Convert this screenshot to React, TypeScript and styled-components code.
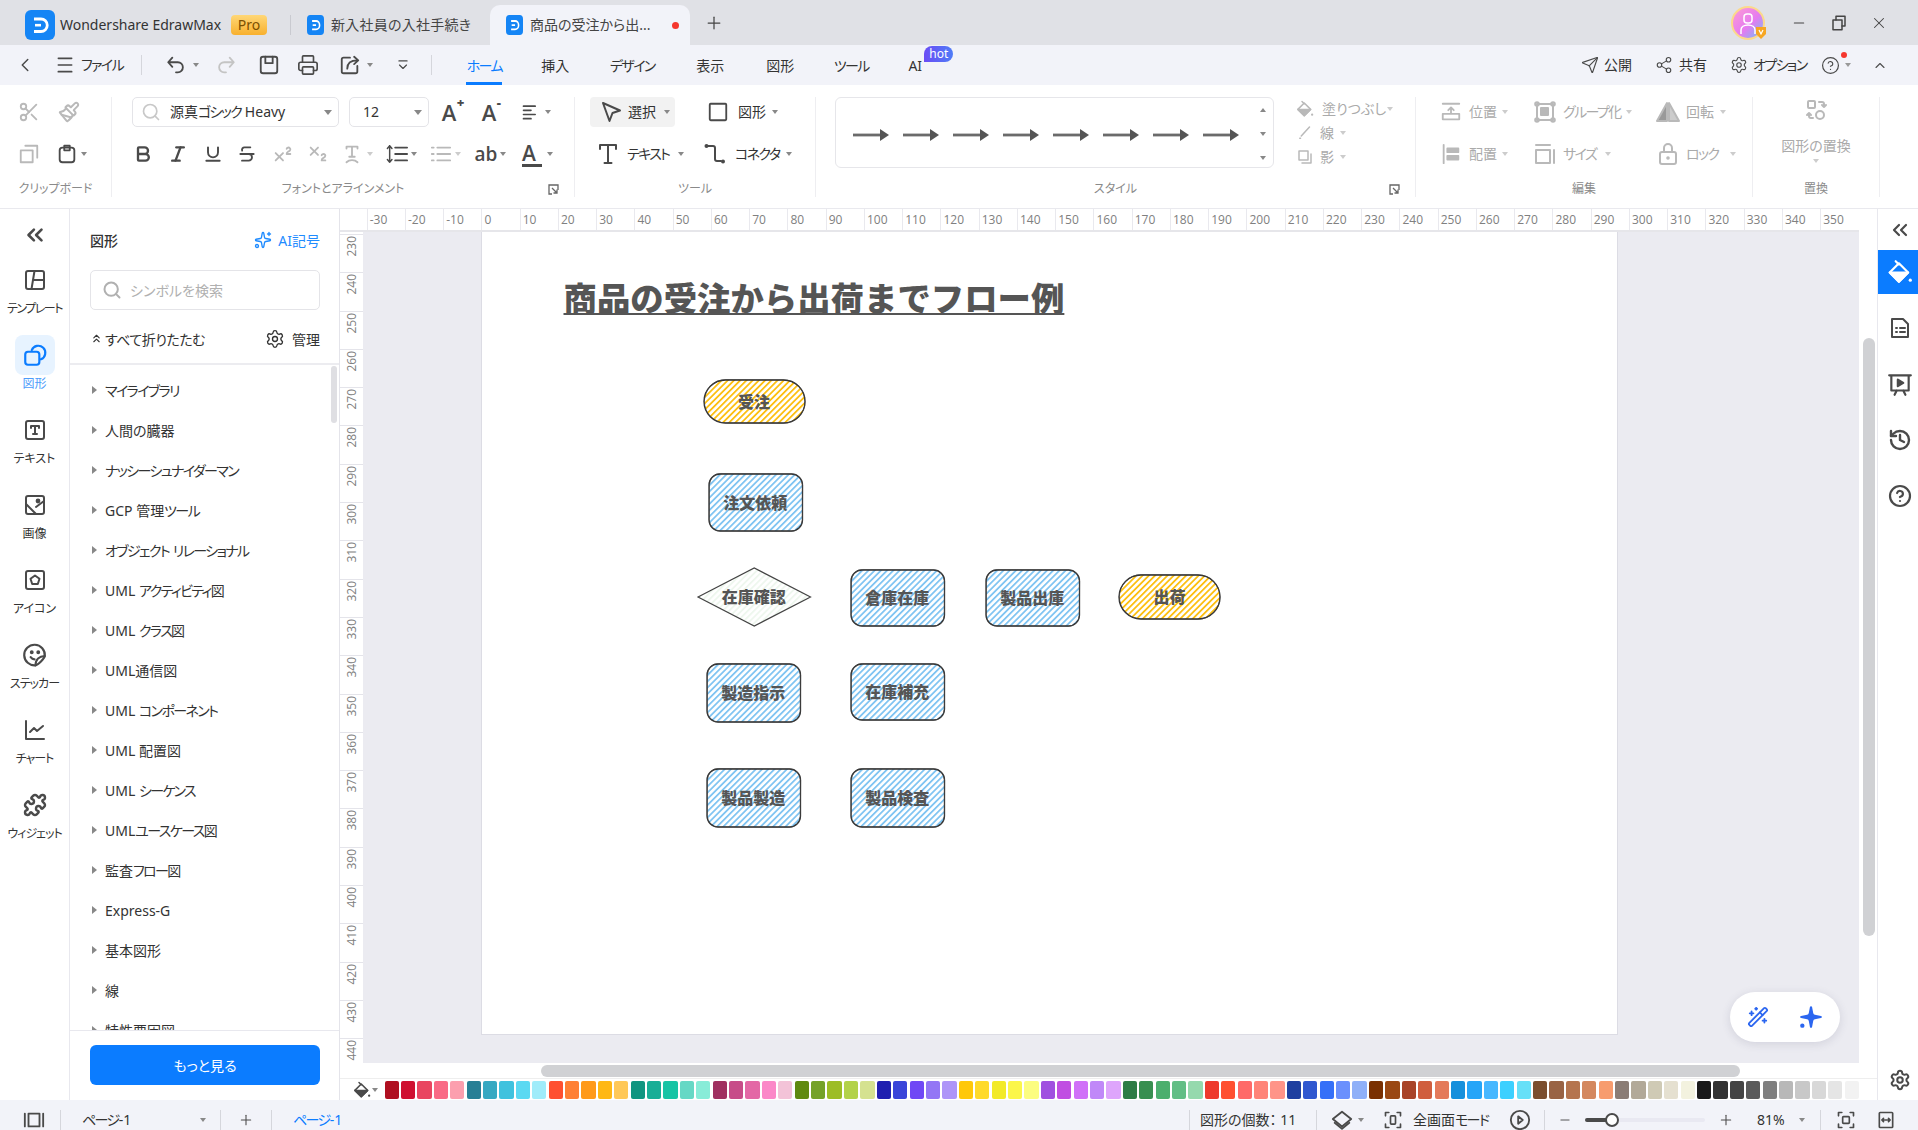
import React from "react";
import styled, { createGlobalStyle } from "styled-components";
import {
  ChevronLeft, ChevronUp, ChevronsLeft, Scissors, Paintbrush, Printer, Bold, Italic, Underline,
  Strikethrough, Superscript, Subscript, Settings, Send, Share2, CircleHelp, Search, Sparkles,
  Puzzle, History, Plus, Minus, X, Wand2, ChevronsUp,
} from "lucide-react";

const DARK = "#4a4a4a";
const GRAY = "#b9b9b9";
const BLUE = "#0b7cff";
const BAR = "#f2f3f9";
const FONT = `"Noto Sans", "Noto Sans CJK JP", sans-serif`;

const Global = createGlobalStyle`
  html, body { margin: 0; padding: 0; width: 1918px; height: 1130px; overflow: hidden; background: #fff; }
  #root { width: 1918px; height: 1130px; }
  * { box-sizing: border-box; }
  body { font-family: ${FONT}; font-feature-settings: "palt"; color: #333; }
`;

const Shell = styled.div`
  width: 1918px; height: 1130px; display: flex; flex-direction: column; overflow: hidden;
`;

/* katakana runs are set tighter, as in the original UI font */
const Ka = styled.span`letter-spacing: -0.115em;`;
const J = ({ children }: { children: string }) => (
  <>{children.split(/([\u30A1-\u30FF\u30FC]+)/).map((s, i) => (i % 2 ? <Ka key={i}>{s}</Ka> : s))}</>
);

/* generic drawing primitives */
const Ic = styled.svg.attrs({ viewBox: "0 0 24 24", fill: "none", stroke: "currentColor", strokeWidth: 2, strokeLinecap: "round", strokeLinejoin: "round" })<{ $s?: number }>`
  width: ${(p) => p.$s ?? 22}px; height: ${(p) => p.$s ?? 22}px; flex: none; display: block;
`;
const Slot = styled.span<{ $w?: number; $ml?: number; $c?: string }>`
  display: inline-flex; align-items: center; justify-content: center; flex: none;
  width: ${(p) => p.$w ?? 22}px; margin-left: ${(p) => p.$ml ?? 0}px; color: ${(p) => p.$c ?? DARK};
`;
const Caret = styled.span<{ $ml?: number; $c?: string; $up?: boolean }>`
  flex: none; width: 0; height: 0; margin-left: ${(p) => p.$ml ?? 4}px;
  border-left: 3.5px solid transparent; border-right: 3.5px solid transparent;
  ${(p) => (p.$up ? "border-bottom" : "border-top")}: 4px solid ${(p) => p.$c ?? "#888"};
`;
const Txt = styled.span<{ $w?: number; $ml?: number; $c?: string; $fs?: number }>`
  flex: none; white-space: nowrap; font-size: ${(p) => p.$fs ?? 14}px; line-height: 20px;
  color: ${(p) => p.$c ?? "#333"}; margin-left: ${(p) => p.$ml ?? 0}px;
  ${(p) => (p.$w ? `width: ${p.$w}px;` : "")}
`;

/* ---------- title bar ---------- */
const TitleBar = styled.div`
  height: 45px; background: #e0e1e6; display: flex; align-items: stretch; padding-left: 25px;
`;
const HomeTab = styled.div`
  display: flex; align-items: center; width: 265px; padding-top: 5px;
`;
const ProBadge = styled.span`
  margin-left: 11px; width: 36px; height: 20px; border-radius: 4px; display: flex; align-items: center; justify-content: center;
  background: linear-gradient(180deg, #ffd777, #f8b02e); color: #7b4f00; font-size: 14px; line-height: 20px;
`;
const TabDivider = styled.span`
  width: 1px; height: 20px; background: #c9cad0; align-self: center; margin-top: 5px;
`;
const DocTab = styled.div<{ $active?: boolean }>`
  display: flex; align-items: center; padding-left: 16px; margin-top: 5px; height: 40px;
  width: ${(p) => (p.$active ? 200 : 199)}px;
  ${(p) => p.$active && `background: ${BAR}; border-radius: 10px 10px 0 0;`}
`;
const DocName = styled(Txt)`
  letter-spacing: 0.25px;
`;
const Unsaved = styled.span`
  width: 7px; height: 7px; border-radius: 50%; background: #f5372e; margin-left: 21px; flex: none;
`;
const WinControls = styled.div`
  margin-left: auto; display: flex; align-items: center; color: #444;
`;

const Logo = ({ w, h }: { w: number; h: number }) => (
  <svg width={w} height={h} viewBox="0 0 30 30" preserveAspectRatio="none">
    <rect x="0" y="0" width="30" height="30" rx="6" fill="#1585f5" />
    <path d="M9 9 H16 A6.2 6.2 0 0 1 16 21.5 H9" fill="none" stroke="#fff" strokeWidth="2.8" />
    <path d="M10 15.2 H16" stroke="#fff" strokeWidth="2.6" />
  </svg>
);
const Avatar = () => (
  <svg width="40" height="38" viewBox="0 0 40 38">
    <defs>
      <linearGradient id="av" x1="0" y1="0" x2="1" y2="1">
        <stop offset="0" stopColor="#ff9ed2" />
        <stop offset="0.55" stopColor="#e57bf0" />
        <stop offset="1" stopColor="#63c8f5" />
      </linearGradient>
    </defs>
    <circle cx="18" cy="19" r="16" fill="url(#av)" stroke="#fbd98c" strokeWidth="2" />
    <rect x="14" y="10" width="8" height="9" rx="3" fill="none" stroke="#fff" strokeWidth="1.5" />
    <path d="M11 30 v-4 c0-3 3-5 7-5 s7 2 7 5 v4" fill="none" stroke="#fff" strokeWidth="1.5" />
    <path d="M26 23 h10 v7 l-5 5 -5-5z" fill="#f6a623" />
    <path d="M29 26 l2 4 2-4" fill="none" stroke="#fff" strokeWidth="1.2" />
  </svg>
);

/* ---------- menu bar ---------- */
const MenuBar = styled.div`
  height: 40px; background: ${BAR}; display: flex; align-items: center;
`;
const MenuSep = styled.span<{ $ml?: number }>`
  width: 1px; height: 20px; background: #d5d6dc; margin-left: ${(p) => p.$ml ?? 0}px; flex: none;
`;
const MenuTabs = styled.div`
  display: flex; margin-left: 16.2px;
`;
const MenuTab = styled.div<{ $w: number; $active?: boolean }>`
  position: relative; width: ${(p) => p.$w}px; height: 40px; display: flex; align-items: center; justify-content: center;
  font-size: 14px; color: ${(p) => (p.$active ? BLUE : "#333")}; flex: none;
  ${(p) => p.$active && `&::after { content: ""; position: absolute; bottom: 0; left: 18px; right: 18px; height: 3px; background: ${BLUE}; }`}
`;
const HotBadge = styled.span`
  position: absolute; left: 36px; top: 1px; width: 29px; height: 16px; border-radius: 8px 8px 8px 0;
  background: linear-gradient(90deg, #6a4cf5, #4f7cf7); color: #fff; font-size: 12px; line-height: 15px; text-align: center;
`;
const MenuRight = styled.div`
  margin-left: auto; display: flex; align-items: center; align-self: stretch; padding-right: 30px; position: relative;
`;
const NotifyDot = styled.span`
  position: absolute; right: 71px; top: 7px; width: 6px; height: 6px; border-radius: 50%; background: #f5372e;
`;

/* ---------- ribbon ---------- */
const Ribbon = styled.div`
  height: 124px; background: #fff; display: flex; align-items: flex-start; border-bottom: 1px solid #e9e9ee;
`;
const Group = styled.div<{ $w: number }>`
  width: ${(p) => p.$w}px; height: 100px; margin-top: 12px; display: flex; flex-direction: column; flex: none;
  border-right: 1px solid #eeeef1;
`;
const GroupBody = styled.div<{ $pl?: number }>`
  flex: 1; padding-left: ${(p) => p.$pl ?? 0}px; display: flex; flex-direction: column; gap: 12px; min-height: 0;
`;
const GroupFoot = styled.div`
  height: 18px; padding-top: 2px; display: grid; grid-template-columns: 1fr auto 1fr; align-items: center;
  font-size: 12px; line-height: 16px; color: #8a8a8a;
`;
const FootText = styled.span`grid-column: 2;`;
const Launcher = styled.span`
  grid-column: 3; justify-self: end; margin-right: 15px; display: flex; color: #666;
`;
const RRow = styled.div`
  height: 30px; display: flex; align-items: center;
`;
const Combo = styled.div<{ $w: number; $ml?: number }>`
  width: ${(p) => p.$w}px; height: 30px; margin-left: ${(p) => p.$ml ?? 0}px; border: 1px solid #e4e4e8; border-radius: 5px;
  display: flex; align-items: center; flex: none; position: relative; font-size: 14px; color: #333;
`;
const ComboCaret = styled(Caret)`
  margin-left: auto; margin-right: 6px; border-left-width: 4px; border-right-width: 4px; border-top-width: 5px;
`;
const Glyph = styled.span<{ $c?: string; $fs?: number }>`
  position: relative; display: inline-block; font-size: ${(p) => p.$fs ?? 22}px; line-height: 24px; font-weight: 600;
  color: ${(p) => p.$c ?? DARK}; font-family: "Open Sans", sans-serif;
`;
const GlyphMark = styled.span`
  position: absolute; left: 15px; top: -5px; font-size: 13px; line-height: 14px; font-weight: 800;
`;
const UnderBar = styled.span`
  display: block; width: 20px; height: 3px; background: ${DARK}; margin: -1px auto 0;
`;
const Selected = styled.div`
  width: 85px; height: 30px; background: #f2f2f2; border-radius: 4px; display: flex; align-items: center;
  padding-left: 9px; margin-left: 15px; flex: none;
`;
const ToolBtn = styled.div<{ $ml?: number; $w?: number }>`
  display: flex; align-items: center; flex: none; margin-left: ${(p) => p.$ml ?? 0}px;
  ${(p) => (p.$w ? `width: ${p.$w}px;` : "")}
`;
const Gallery = styled.div`
  width: 439px; height: 71px; margin-left: 19px; border: 1px solid #e6e6ea; border-radius: 6px; display: flex; align-items: center;
  padding: 4px 7px 0 17px; gap: 14px; flex: none;
`;
const GalleryArrows = styled.div`
  margin-left: auto; display: flex; flex-direction: column; justify-content: space-between; height: 52px; align-items: center; margin-top: -2px;
`;
const StyleRow = styled.div`
  display: flex; align-items: flex-start;
`;
const FillCol = styled.div`
  margin-left: 21px; display: flex; flex-direction: column;
`;
const FillItem = styled.div`
  height: 24px; display: flex; align-items: center;
`;
const EditGrid = styled.div`
  display: grid; grid-template-columns: 93px 123px 1fr; grid-auto-rows: 30px; row-gap: 12px; padding-left: 24px; align-items: center;
`;
const ReplaceCol = styled.div`
  display: flex; flex-direction: column; align-items: center; height: 80px; padding-top: 1px;
`;
const ReplaceLabel = styled(Txt)`
  margin-top: 14px;
`;
const ReplaceCaret = styled(Caret)`
  margin-top: 3px;
`;

/* ---------- workspace ---------- */
const Workspace = styled.div`
  flex: 1; display: flex; min-height: 0;
`;
const Rail = styled.div`
  width: 70px; flex: none; border-right: 1px solid #e8e8ee; display: flex; flex-direction: column; align-items: center;
`;
const RailTop = styled.div`
  height: 51px; display: flex; align-items: center; justify-content: center; color: ${DARK};
`;
const RailItem = styled.div<{ $active?: boolean }>`
  width: 70px; height: 75px; flex: none; display: flex; flex-direction: column; align-items: center;
  color: ${(p) => (p.$active ? BLUE : DARK)};
`;
const RailIcon = styled.div<{ $active?: boolean }>`
  width: 40px; height: 40px; border-radius: 8px; display: flex; align-items: center; justify-content: center;
  ${(p) => p.$active && "background: #e7f3ff;"}
`;
const RailLabel = styled.div<{ $active?: boolean; $ls?: number }>`
  font-size: 12px; line-height: 16px; margin-top: 1px; color: ${(p) => (p.$active ? "#4c9cfb" : "#333")}; white-space: nowrap;
  letter-spacing: ${(p) => p.$ls ?? 0}px;
`;

const Panel = styled.div`
  width: 270px; flex: none; border-right: 1px solid #e4e4ea; display: flex; flex-direction: column; position: relative;
`;
const PanelHead = styled.div`
  height: 61px; padding: 0 19px 0 20px; display: flex; align-items: center; justify-content: space-between;
`;
const PanelTitle = styled.span`
  font-size: 14px; font-weight: 500; color: #333;
`;
const AiLink = styled.span`
  display: flex; align-items: center; gap: 6px; font-size: 14px; color: #1f8bff;
`;
const SearchBox = styled.div`
  margin: 0 19px 0 20px; height: 40px; border: 1px solid #e4e4e8; border-radius: 5px; display: flex; align-items: center; padding-left: 11px; gap: 8px;
  font-size: 14px; color: #b0b0b0;
`;
const CollapseRow = styled.div`
  height: 55px; padding: 4px 19px 0 20px; display: flex; align-items: center; justify-content: space-between; border-bottom: 2px solid #ececf0;
  font-size: 14px;
`;
const CollapseSide = styled.span`
  display: flex; align-items: center; gap: 2px; color: #333; letter-spacing: -0.5px;
`;
const ManageSide = styled.span`
  display: flex; align-items: center; gap: 7px; color: #333;
`;
const SymList = styled.div`
  flex: 1; overflow: hidden; padding-top: 5px; min-height: 0;
`;
const SymRow = styled.div`
  height: 40px; flex: none; display: flex; align-items: center; padding-left: 22px; gap: 8px; font-size: 14px; color: #333; white-space: nowrap;
`;
const SymName = styled.span`white-space: pre;`;
const SymArrow = styled.span`
  width: 0; height: 0; border-top: 4px solid transparent; border-bottom: 4px solid transparent; border-left: 5px solid #888; flex: none;
`;
const PanelThumb = styled.span`
  position: absolute; right: 2px; top: 157px; width: 6px; height: 57px; border-radius: 3px; background: #dfdfe3;
`;
const PanelFoot = styled.div`
  height: 70px; flex: none; border-top: 1px solid #e8e8ee; padding: 14px 19px 0 20px;
`;
const MoreBtn = styled.div`
  height: 40px; background: ${BLUE}; border-radius: 6px; color: #fff; font-size: 14px; display: flex; align-items: center; justify-content: center;
`;

const Main = styled.div`
  flex: 1; min-width: 0; display: flex; flex-direction: column; background: #fff;
`;
const HRuler = styled.div`
  height: 23px; display: flex; flex: none; border-bottom: 2px solid #e6e6ea; padding-left: 26.7px; margin-right: 18px; overflow: hidden;
`;
const HTick = styled.div`
  width: 38.26px; flex: none; height: 21px; border-left: 1px solid #e9e9ee; padding-left: 2px;
  font-family: "Open Sans", sans-serif; font-size: 12px; line-height: 21px; color: #808080; white-space: nowrap; font-feature-settings: normal;
`;
const MidRow = styled.div`
  flex: 1; display: flex; min-height: 0;
`;
const VRuler = styled.div`
  width: 23px; flex: none; overflow: hidden; padding-top: 2px;
`;
const VTick = styled.div`
  height: 38.3px; border-top: 1px solid #e4e4ea; display: flex; align-items: flex-start; justify-content: center; padding-top: 1px;
  font-family: "Open Sans", sans-serif; font-size: 12px; color: #808080; font-feature-settings: normal;
`;
const VLabel = styled.span`
  writing-mode: vertical-rl; transform: rotate(180deg); line-height: 14px;
`;
const Canvas = styled.div`
  flex: 1; min-width: 0; background: #ebebf1; position: relative; overflow: hidden; padding-left: 117.5px;
`;
const Page = styled.div`
  width: 1137px; height: 803px; background: #fff; border: 1px solid #dcdce4; border-top: none; position: relative;
`;
const PageTitle = styled.div`
  position: absolute; left: 82px; top: 48px; font-family: "Noto Sans CJK JP", sans-serif; font-weight: 900; font-size: 33.4px; line-height: 34px;
  color: #555; text-decoration: underline; text-decoration-thickness: 2px; text-underline-offset: 2px; white-space: nowrap; font-feature-settings: normal;
`;
const Node = styled.div<{ $x: number; $y: number; $w: number; $h: number }>`
  position: absolute; left: ${(p) => p.$x}px; top: ${(p) => p.$y}px; width: ${(p) => p.$w}px; height: ${(p) => p.$h}px;
`;
const NodeArt = styled.svg`
  position: absolute; inset: 0; overflow: visible; display: block;
`;
const NodeLabel = styled.div`
  position: absolute; inset: 0 0 2px; display: flex; align-items: center; justify-content: center;
  font-family: "Noto Sans CJK JP", sans-serif; font-weight: 900; font-size: 16px; color: #555; font-feature-settings: normal; white-space: nowrap;
`;
const PatternDefs = styled.svg`
  position: absolute; width: 0; height: 0;
`;
const AiPill = styled.div`
  position: absolute; left: 1367px; top: 760px; width: 110px; height: 50px; border-radius: 25px; background: #fff;
  box-shadow: 0 2px 10px rgba(60, 60, 90, 0.14); display: flex; align-items: center; padding-left: 17px; gap: 29px;
`;
const VScroll = styled.div`
  width: 18px; flex: none; padding: 106px 2px 0 4px;
`;
const VThumb = styled.div`
  width: 12px; height: 598px; border-radius: 6px; background: #d0d1d4;
`;
const HScrollRow = styled.div`
  height: 16px; flex: none; padding: 2px 0 0 201px; border-bottom: 1px solid #eee;
`;
const HThumb = styled.div`
  width: 1199px; height: 12px; border-radius: 6px; background: #d0d1d4;
`;
const ColorRow = styled.div`
  height: 21px; flex: none; display: flex; align-items: center; padding-left: 12px;
`;
const SwatchWrap = styled.div`
  display: flex; gap: 2.2px; margin-left: 6.5px;
`;
const Swatch = styled.span<{ $c: string }>`
  width: 14.22px; height: 18px; border-radius: 2px; background: ${(p) => p.$c}; flex: none;
`;

const RightRail = styled.div`
  width: 41px; flex: none; border-left: 1px solid #e8e8ee; display: flex; flex-direction: column; align-items: stretch;
`;
const RightTop = styled.div`
  height: 41px; padding-left: 3px; display: flex; align-items: center; justify-content: center; color: ${DARK};
`;
const RightActive = styled.div`
  height: 44px; padding-left: 3px; background: ${BLUE}; color: #fff; display: flex; align-items: center; justify-content: center; margin-bottom: 6px;
`;
const RightItem = styled.div`
  height: 56px; padding-left: 3px; display: flex; align-items: center; justify-content: center; color: ${DARK};
`;
const RightGear = styled.div`
  height: 40px; padding-left: 3px; margin-top: auto; display: flex; align-items: center; justify-content: center; color: ${DARK};
`;

const Status = styled.div`
  height: 30px; background: ${BAR}; display: flex; align-items: center; flex: none; padding-top: 10px;
`;
const StatusRight = styled.div`
  margin-left: auto; width: 729px; display: flex; align-items: center; flex: none;
`;
const Slider = styled.div`
  width: 120px; height: 4px; margin-left: 13px; background: #e9e9f2; border-radius: 2px; position: relative; flex: none;
`;
const SliderFill = styled.div`
  width: 26px; height: 4px; background: #4a4a4a; border-radius: 2px;
`;
const SliderKnob = styled.span`
  position: absolute; left: 20px; top: -5px; width: 14px; height: 14px; border-radius: 50%; background: #fff; border: 2px solid #4a4a4a;
`;

/* ---------- drawn icons ---------- */
const MiniT = ({ c }: { c?: string }) => (
  <Slot $c={c}><Ic $s={24} strokeWidth={2.4}><path d="M4 7V3h16v4M12 3v18M8.500 21h7" /></Ic></Slot>
);
const Arrow = () => (
  <svg width="36" height="14" viewBox="0 0 36 14">
    <rect x="0" y="5.6" width="28" height="2.8" fill="#6b6b6b" />
    <path d="M27 1 L36 7 L27 13z" fill="#555" />
  </svg>
);
const LauncherIcon = () => (
  <svg width="11" height="11" viewBox="0 0 11 11" fill="none" stroke="currentColor" strokeWidth="1.3">
    <path d="M5 1H1v9h3M5 1h5v5" />
    <path d="M4 4l5 5M9 5.5V9H5.5" />
  </svg>
);
const Bucket = ({ s }: { s: number }) => (
  <Ic $s={s} strokeWidth={2}>
    <path d="M8 2l3 3" />
    <path d="M11 4l8.500 8.500L11 21l-8.500-8.500z" />
    <path d="M2.500 12.500h17L11 21z" fill="currentColor" />
    <circle cx="21.500" cy="19.500" r="1.500" fill="currentColor" stroke="none" />
  </Ic>
);

const FLOW = [
  { t: "受注", k: "pill", x: 221, y: 147, w: 103, h: 45 },
  { t: "注文依頼", k: "box", x: 226, y: 241, w: 95.5, h: 59 },
  { t: "在庫確認", k: "dia", x: 215, y: 335, w: 114.5, h: 60 },
  { t: "倉庫在庫", k: "box", x: 368, y: 337, w: 95.5, h: 58 },
  { t: "製品出庫", k: "box", x: 503, y: 337, w: 95.5, h: 58 },
  { t: "出荷", k: "pill", x: 636.5, y: 342, w: 103, h: 46 },
  { t: "製造指示", k: "box", x: 224, y: 431, w: 95.5, h: 60 },
  { t: "在庫補充", k: "box", x: 368, y: 431, w: 95.5, h: 58 },
  { t: "製品製造", k: "box", x: 224, y: 536, w: 95.5, h: 60 },
  { t: "製品検査", k: "box", x: 368, y: 536, w: 95.5, h: 60 },
];

const FlowShape = ({ k, w, h }: { k: string; w: number; h: number }) => {
  const fill = k === "pill" ? "url(#hatchY)" : k === "dia" ? "url(#hatchG)" : "url(#hatchB)";
  if (k === "dia") {
    const d = `M1 ${h / 2} L${w / 2} 1 L${w - 1} ${h / 2} L${w / 2} ${h - 1}Z`;
    return (
      <NodeArt width={w} height={h}>
        <path d={d} fill={fill} stroke="#444" strokeWidth="1.2" />
      </NodeArt>
    );
  }
  const r = k === "pill" ? h / 2 - 1 : 11;
  return (
    <NodeArt width={w} height={h}>
      <rect x="1" y="1" width={w - 2} height={h - 2} rx={r} fill={fill} stroke="#2f2f2f" strokeWidth="1.3" />
      <rect x="1.4" y="0.7" width={w - 2.4} height={h - 1.6} rx={r} fill="none" stroke="#444" strokeWidth="0.7" transform={`rotate(0.35 ${w / 2} ${h / 2})`} />
    </NodeArt>
  );
};

const COLORS = [
  "#b01020","#cf1030","#e94560","#f96a85","#fc9fae","#287f95","#36a9c2","#3fc2de","#5cd9f2","#a0ecfa",
  "#ff5030","#ff8035","#ff9a1a","#ffb815","#ffc858","#109580","#18ae96","#18c4a5","#66d8c5","#88ecd8",
  "#a03060","#c74c88","#e368a5","#fb88c8","#f3c3d8","#5f8a10","#75a228","#9dbd25","#b3d24a","#d5e290",
  "#2020b0","#3a45d9","#7048f5","#9376f5","#ae95f8","#ffc80a","#ffda2a","#f2ea28","#fbf64a","#fcfd80",
  "#a050e0","#c04ee2","#d070f8","#c088f8","#dea5fc","#2e7d46","#388f50","#4caf6e","#62be85","#95d9ad",
  "#ee3a2c","#ff5030","#ff6a68","#ff8478","#ff9488","#1e3fa0","#3058d0","#3570f8","#6a90fd","#8fb0f8",
  "#7a3000","#9a4812","#a94428","#d05e3e","#e47a5a","#1690dc","#25a5f8","#48b8ff","#3dd0ff","#66e0f8",
  "#7b4e2e","#996344","#b5754f","#d4885e","#f79c6e","#8b7d75","#b2a998","#cfcab5","#e5e0d0","#f3f2df",
  "#1a1a1a","#333333","#444444","#5a5a5a","#7f7f7f","#b8b8b8","#c8c8c8","#d8d8d8","#e5e5e5","#f2f2f2","#ffffff",
];

const SYMBOLS = ["マイライブラリ","人間の臓器","ナッシーシュナイダーマン","GCP 管理ツール","オブジェクト リレーショナル","UML アクティビティ図","UML クラス図","UML通信図","UML コンポーネント","UML 配置図","UML シーケンス","UMLユースケース図","監査フロー図","Express-G","基本図形","線","特性要因図"];
const HT = Array.from({ length: 39 }, (_, i) => -30 + i * 10);
const VT = Array.from({ length: 22 }, (_, i) => 230 + i * 10);

const TemplateIcon = () => (<Ic $s={24} strokeWidth={2.6}><rect x="3" y="3" width="18" height="18" rx="2" /><path d="M11.5 3 L8.5 21 M10.5 12 H21" /></Ic>);
const ShapesIcon = () => (<Ic $s={26} strokeWidth={2.6}><rect x="3" y="9" width="13" height="12" rx="2.5" /><path d="M9 7.5a6.5 6.5 0 1 1 8.5 8.5" /></Ic>);
const TextRail = () => (<Ic $s={24} strokeWidth={2.4}><rect x="3" y="3" width="18" height="18" rx="2" /><path d="M8 10V8h8v2M12 8v8M10 16h4" /></Ic>);
const ImageRail = () => (<Ic $s={24} strokeWidth={2.4}><rect x="3" y="3" width="18" height="18" rx="2" /><path d="M3 11l10 10M13 14l8-6" /><circle cx="15" cy="8" r="1.4" fill="currentColor" /></Ic>);
const IconRail = () => (<Ic $s={24} strokeWidth={2.4}><rect x="3" y="3" width="18" height="18" rx="2" /><path d="M12 7.5l4.5 3.3-1.7 5.2H9.2l-1.7-5.2z" /></Ic>);
const StickerRail = () => (<Ic $s={26} strokeWidth={2.4}><path d="M21 13a9.5 9.5 0 1 0-8.5 8.5c2 0 8.5-6.5 8.5-8.5z" /><path d="M21 13c-5 0-8.5 3-8.5 8.5" /><circle cx="9" cy="9.5" r="0.8" fill="currentColor" /><circle cx="15" cy="9.5" r="0.8" fill="currentColor" /><path d="M8 14c1 1.4 2 2 3.6 2" /></Ic>);
const ChartRail = () => (<Ic $s={24} strokeWidth={2.4}><path d="M3 3v18h18" /><path d="M7 14l4-4 3 3 6-5" /></Ic>);

const App = () => (
  <Shell>
    <Global />
    <TitleBar>
      <HomeTab>
        <Logo w={30} h={30} />
        <Txt $ml={5} $w={160}>Wondershare EdrawMax</Txt>
        <ProBadge>Pro</ProBadge>
      </HomeTab>
      <TabDivider />
      <DocTab><Logo w={17} h={20} /><DocName $ml={7} $c="#444">新入社員の入社手続き</DocName></DocTab>
      <DocTab $active><Logo w={17} h={20} /><Txt $ml={7} $w={121} $c="#444">商品の受注から出...</Txt><Unsaved /></DocTab>
      <Slot $w={20} $ml={14} $c="#444"><Plus size={20} strokeWidth={1.5} /></Slot>
      <WinControls>
        <Avatar />
        <Slot $w={16} $ml={21} $c="#444"><Minus size={16} strokeWidth={1.6} /></Slot>
        <Slot $w={18} $ml={23} $c="#444">
          <Ic $s={18} strokeWidth={1.6}><rect x="4" y="8" width="12" height="13" /><path d="M8 8V3h12v13h-4" /></Ic>
        </Slot>
        <Slot $w={18} $ml={22} $c="#444"><X size={18} strokeWidth={1.4} /></Slot>
        <Slot $w={30} />
      </WinControls>
    </TitleBar>

    <MenuBar>
      <Slot $w={22} $ml={14}><ChevronLeft size={24} strokeWidth={1.6} /></Slot>
      <Slot $w={22} $ml={18}><Ic $s={20} strokeWidth={1.6}><path d="M4 4h16M4 12h16M4 20h16" /></Ic></Slot>
      <Txt $ml={5} $w={60}><J>ファイル</J></Txt>
      <MenuSep />
      <Slot $w={22} $ml={23}><Ic strokeWidth={1.7}><path d="M8 4L3.5 9 8 14M4 9h10a5.500 5.500 0 0 1 0 11h-2" /></Ic></Slot>
      <Caret $ml={6} />
      <Slot $w={22} $ml={16} $c="#c4c4c4"><Ic strokeWidth={1.7}><path d="M16 4l4.500 5-4.500 5M20 9H10a5.500 5.500 0 0 0 0 11h2" /></Ic></Slot>
      <Slot $w={22} $ml={21}><Ic strokeWidth={1.7}><rect x="3" y="3" width="18" height="18" rx="2.500" /><path d="M8 3v7h8V3" /></Ic></Slot>
      <Slot $w={22} $ml={16.5}><Printer size={22} strokeWidth={1.8} /></Slot>
      <Slot $w={22} $ml={20}><Ic strokeWidth={1.7}><path d="M12 4H5a2 2 0 0 0-2 2v13a2 2 0 0 0 2 2h13a2 2 0 0 0 2-2v-6" /><path d="M9 16c0-6 4-9 11-9M16.500 3L21 7l-4.500 4" /></Ic></Slot>
      <Caret $ml={6} />
      <Slot $w={14} $ml={23.6}><Ic $s={14} strokeWidth={1.8}><path d="M5 5h14M6 12l6 6 6-6" /></Ic></Slot>
      <MenuSep $ml={21} />
      <MenuTabs>
        <MenuTab $w={72} $active><J>ホーム</J></MenuTab>
        <MenuTab $w={70}>挿入</MenuTab>
        <MenuTab $w={84}><J>デザイン</J></MenuTab>
        <MenuTab $w={72}>表示</MenuTab>
        <MenuTab $w={68}>図形</MenuTab>
        <MenuTab $w={74}><J>ツール</J></MenuTab>
        <MenuTab $w={54}>AI<HotBadge>hot</HotBadge></MenuTab>
      </MenuTabs>
      <MenuRight>
        <Slot $w={20}><Send size={18} strokeWidth={1.5} /></Slot>
        <Txt $ml={4} $w={29}>公開</Txt>
        <Slot $w={20} $ml={21}><Share2 size={18} strokeWidth={1.5} /></Slot>
        <Txt $ml={5} $w={29}>共有</Txt>
        <Slot $w={20} $ml={21}><Settings size={18} strokeWidth={1.5} /></Slot>
        <Txt $ml={4} $w={52}><J>オプション</J></Txt>
        <Slot $w={20} $ml={15}><CircleHelp size={19} strokeWidth={1.5} /></Slot>
        <Caret $ml={5} $c="#999" />
        <NotifyDot />
        <Slot $w={16} $ml={21}><ChevronUp size={17} strokeWidth={1.6} /></Slot>
      </MenuRight>
    </MenuBar>

    <Ribbon>
      <Group $w={112}>
        <GroupBody $pl={18}>
          <RRow>
            <Slot $c={GRAY}><Scissors size={22} strokeWidth={2} /></Slot>
            <Slot $c={GRAY} $ml={18}><Paintbrush size={22} strokeWidth={2.2} /></Slot>
          </RRow>
          <RRow>
            <Slot $c={GRAY}><Ic strokeWidth={2.2}><rect x="3" y="8" width="13" height="13" /><path d="M8 3h13v13" /></Ic></Slot>
            <Slot $ml={16}><Ic strokeWidth={2.3}><rect x="4" y="5" width="16" height="16" rx="3" /><path d="M9 5V3h6v5H9z" /></Ic></Slot>
            <Caret $ml={3} />
          </RRow>
        </GroupBody>
        <GroupFoot><FootText>クリップボード</FootText></GroupFoot>
      </Group>

      <Group $w={463}>
        <GroupBody $pl={20}>
          <RRow>
            <Combo $w={207}>
              <Slot $w={20} $ml={8} $c="#c8c8c8"><Search size={20} strokeWidth={2} /></Slot>
              <Txt $ml={9}><J>源真ゴシック Heavy</J></Txt>
              <ComboCaret />
            </Combo>
            <Combo $w={80} $ml={10}>
              <Txt $ml={13}>12</Txt>
              <ComboCaret />
            </Combo>
            <Slot $w={26} $ml={7}><Glyph>A<GlyphMark>+</GlyphMark></Glyph></Slot>
            <Slot $w={26} $ml={14}><Glyph>A<GlyphMark>-</GlyphMark></Glyph></Slot>
            <Slot $w={20} $ml={19}><Ic $s={20} strokeWidth={2.6} strokeLinecap="butt"><path d="M3 5h14M3 10h9M3 15h14M3 20h9" /></Ic></Slot>
            <Caret $ml={4} />
          </RRow>
          <RRow>
            <Slot $w={22} $ml={0}><Bold size={20} strokeWidth={2.8} /></Slot>
            <Slot $w={22} $ml={13}><Italic size={20} strokeWidth={2.8} /></Slot>
            <Slot $w={22} $ml={13}><Underline size={20} strokeWidth={2.3} /></Slot>
            <Slot $w={22} $ml={12}><Strikethrough size={20} strokeWidth={2.2} /></Slot>
            <Slot $w={22} $ml={14} $c={GRAY}><Superscript size={22} strokeWidth={2} /></Slot>
            <Slot $w={22} $ml={13} $c={GRAY}><Subscript size={22} strokeWidth={2} /></Slot>
            <Slot $w={22} $ml={12} $c={GRAY}><Ic><path d="M6 6V4h12v2M12 4v11M9 15h6M6 21c3-3 9-3 12 0" /></Ic></Slot>
            <Caret $ml={4} $c="#ccc" />
            <Slot $w={22} $ml={13}><Ic strokeWidth={2.4} strokeLinecap="butt"><path d="M10 5h13M10 12h13M10 19h13" /><path d="M4 3v18M1.500 6L4 3l2.500 3M1.500 18L4 21l2.500-3" strokeWidth="1.600" /></Ic></Slot>
            <Caret $ml={3} />
            <Slot $w={22} $ml={13} $c={GRAY}><Ic strokeWidth={2.2} strokeLinecap="butt"><path d="M8 5h14M8 12h14M8 19h14M2 5h2M2 12h2M2 19h2" /></Ic></Slot>
            <Caret $ml={3} $c="#ccc" />
            <Slot $w={24} $ml={13}><Glyph $fs={19}>ab</Glyph></Slot>
            <Caret $ml={2} />
            <Slot $w={24} $ml={14}><Glyph $fs={21}>A<UnderBar /></Glyph></Slot>
            <Caret $ml={3} />
          </RRow>
        </GroupBody>
        <GroupFoot><FootText>フォントとアラインメント</FootText><Launcher><LauncherIcon /></Launcher></GroupFoot>
      </Group>

      <Group $w={241}>
        <GroupBody>
          <RRow>
            <Selected>
              <Slot $w={24}><Ic $s={24} strokeWidth={2}><path d="M4 3l17 7.500-7.500 2.500-3 8z" /></Ic></Slot>
              <Txt $ml={5} $w={30} $fs={14}>選択</Txt>
              <Caret $ml={6} />
            </Selected>
            <ToolBtn $ml={32}>
              <Slot $w={22}><Ic $s={22} strokeWidth={2.4}><rect x="3" y="3" width="18" height="18" rx="1" /></Ic></Slot>
              <Txt $ml={9}>図形</Txt>
              <Caret $ml={6} />
            </ToolBtn>
          </RRow>
          <RRow>
            <ToolBtn $ml={22}>
              <MiniT />
              <Txt $ml={8} $w={46}><J>テキスト</J></Txt>
              <Caret $ml={5} />
            </ToolBtn>
            <ToolBtn $ml={19}>
              <Slot $w={24}><Ic $s={24} strokeWidth={2}><path d="M5 4h5c1 0 2 1 2 2v11c0 1 1 2 2 2h4" /><circle cx="3.500" cy="4" r="2" fill="currentColor" stroke="none" /><circle cx="20" cy="19.500" r="2" fill="currentColor" stroke="none" /></Ic></Slot>
              <Txt $ml={8} $w={46}><J>コネクタ</J></Txt>
              <Caret $ml={5} />
            </ToolBtn>
          </RRow>
        </GroupBody>
        <GroupFoot><FootText>ツール</FootText></GroupFoot>
      </Group>

      <Group $w={600}>
        <GroupBody>
          <StyleRow>
            <Gallery>
              {Array.from({ length: 8 }, (_, i) => <Arrow key={i} />)}
              <GalleryArrows>
                <Caret $ml={0} $up />
                <Caret $ml={0} />
                <Caret $ml={0} />
              </GalleryArrows>
            </Gallery>
            <FillCol>
              <FillItem>
                <Slot $w={20} $c={GRAY}><Bucket s={18} /></Slot>
                <Txt $ml={7} $w={58} $c="#aaa">塗りつぶし</Txt>
                <Caret $ml={7} $c="#ccc" />
              </FillItem>
              <FillItem>
                <Slot $w={20} $c={GRAY}><Ic $s={18} strokeWidth={2.6}><path d="M18 4L7 16M5 19h1" /></Ic></Slot>
                <Txt $ml={5} $w={15} $c="#aaa">線</Txt>
                <Caret $ml={5} $c="#ccc" />
              </FillItem>
              <FillItem>
                <Slot $w={20} $c={GRAY}><Ic $s={18} strokeWidth={2.4}><rect x="4" y="4" width="12" height="12" /><path d="M8 20h12V8" /></Ic></Slot>
                <Txt $ml={5} $w={15} $c="#aaa">影</Txt>
                <Caret $ml={5} $c="#ccc" />
              </FillItem>
            </FillCol>
          </StyleRow>
        </GroupBody>
        <GroupFoot><FootText>スタイル</FootText><Launcher><LauncherIcon /></Launcher></GroupFoot>
      </Group>

      <Group $w={337}>
        <GroupBody>
          <EditGrid>
            <ToolBtn><Slot $w={22} $c={GRAY}><Ic strokeWidth={2.200}><path d="M3 3h18M12 13V7M9 10l3-3 3 3" /><rect x="3" y="14" width="18" height="6" /></Ic></Slot><Txt $ml={7} $w={31} $c="#aaa">位置</Txt><Caret $ml={2} $c="#ccc" /></ToolBtn>
            <ToolBtn><Slot $w={24} $c={GRAY}><Ic $s={24} strokeWidth={2.200}><rect x="4" y="4" width="16" height="16" /><rect x="8" y="8" width="7" height="7" fill="currentColor" /><circle cx="4" cy="4" r="1.800" /><circle cx="20" cy="4" r="1.800" /><circle cx="4" cy="20" r="1.800" /><circle cx="20" cy="20" r="1.800" /></Ic></Slot><Txt $ml={6} $w={58} $c="#aaa"><J>グループ</J>化</Txt><Caret $ml={5} $c="#ccc" /></ToolBtn>
            <ToolBtn><Slot $w={24} $c={GRAY}><Ic $s={24} strokeWidth={0}><path d="M11 3v18H1z" fill="#999" /><path d="M13 3v18h10z" fill="#ccc" /></Ic></Slot><Txt $ml={6} $w={32} $c="#aaa">回転</Txt><Caret $ml={2} $c="#ccc" /></ToolBtn>
            <ToolBtn><Slot $w={22} $c={GRAY}><Ic strokeWidth={2.200}><path d="M4 2v20" /><rect x="8" y="6" width="12" height="4" fill="currentColor" /><rect x="8" y="14" width="12" height="4" fill="currentColor" /></Ic></Slot><Txt $ml={7} $w={31} $c="#aaa">配置</Txt><Caret $ml={2} $c="#ccc" /></ToolBtn>
            <ToolBtn><Slot $w={24} $c={GRAY}><Ic $s={24} strokeWidth={2.200}><path d="M3 3h14" /><rect x="3" y="8" width="14" height="13" /><path d="M21 8v13" /></Ic></Slot><Txt $ml={6} $w={40} $c="#aaa"><J>サイズ</J></Txt><Caret $ml={2} $c="#ccc" /></ToolBtn>
            <ToolBtn><Slot $w={24} $c={GRAY}><Ic $s={24} strokeWidth={2.200}><rect x="4" y="10" width="16" height="12" rx="2" /><path d="M8 10V6a4 4 0 0 1 8 0v4" /><circle cx="12" cy="16" r="0.800" /></Ic></Slot><Txt $ml={6} $w={40} $c="#aaa"><J>ロック</J></Txt><Caret $ml={4} $c="#ccc" /></ToolBtn>
          </EditGrid>
        </GroupBody>
        <GroupFoot><FootText>編集</FootText></GroupFoot>
      </Group>

      <Group $w={127}>
        <GroupBody>
          <ReplaceCol>
            <Slot $w={24} $c={GRAY}><Ic $s={24} strokeWidth={2}><rect x="4" y="3" width="7" height="7" rx="1" /><circle cx="16" cy="17" r="4" /><path d="M15 4h3a2 2 0 0 1 2 2v3M18 7l2 2 2-2M9 20H7a2 2 0 0 1-2-2v-3M3 17l2-2 2 2" /></Ic></Slot>
            <ReplaceLabel $c="#aaa">図形の置換</ReplaceLabel>
            <ReplaceCaret $ml={0} $c="#ccc" />
          </ReplaceCol>
        </GroupBody>
        <GroupFoot><FootText>置換</FootText></GroupFoot>
      </Group>
    </Ribbon>

    <Workspace>
      <Rail>
        <RailTop><ChevronsLeft size={26} strokeWidth={2.4} /></RailTop>
        <RailItem><RailIcon><TemplateIcon /></RailIcon><RailLabel $ls={-1.5}>テンプレート</RailLabel></RailItem>
        <RailItem $active><RailIcon $active><ShapesIcon /></RailIcon><RailLabel $active>図形</RailLabel></RailItem>
        <RailItem><RailIcon><TextRail /></RailIcon><RailLabel>テキスト</RailLabel></RailItem>
        <RailItem><RailIcon><ImageRail /></RailIcon><RailLabel>画像</RailLabel></RailItem>
        <RailItem><RailIcon><IconRail /></RailIcon><RailLabel>アイコン</RailLabel></RailItem>
        <RailItem><RailIcon><StickerRail /></RailIcon><RailLabel $ls={-1}>ステッカー</RailLabel></RailItem>
        <RailItem><RailIcon><ChartRail /></RailIcon><RailLabel $ls={-1}>チャート</RailLabel></RailItem>
        <RailItem><RailIcon><Puzzle size={24} strokeWidth={2.4} /></RailIcon><RailLabel $ls={-1}>ウィジェット</RailLabel></RailItem>
      </Rail>

      <Panel>
        <PanelHead>
          <PanelTitle>図形</PanelTitle>
          <AiLink><Sparkles size={18} strokeWidth={1.8} />AI記号</AiLink>
        </PanelHead>
        <SearchBox><Search size={20} strokeWidth={2.4} color="#b0b0b0" />シンボルを検索</SearchBox>
        <CollapseRow>
          <CollapseSide><ChevronsUp size={13} strokeWidth={2} />すべて折りたたむ</CollapseSide>
          <ManageSide><Settings size={20} strokeWidth={1.6} />管理</ManageSide>
        </CollapseRow>
        <SymList>
          {SYMBOLS.map((s) => (<SymRow key={s}><SymArrow /><SymName><J>{s}</J></SymName></SymRow>))}
        </SymList>
        <PanelThumb />
        <PanelFoot><MoreBtn>もっと見る</MoreBtn></PanelFoot>
      </Panel>

      <Main>
        <HRuler>{HT.map((n) => <HTick key={n}>{n}</HTick>)}</HRuler>
        <MidRow>
          <VRuler>{VT.map((n) => <VTick key={n}><VLabel>{n}</VLabel></VTick>)}</VRuler>
          <Canvas>
            <Page>
              <PatternDefs>
                <defs>
                  <pattern id="hatchB" width="4.4" height="4.4" patternUnits="userSpaceOnUse" patternTransform="rotate(45)">
                    <rect width="4.4" height="4.4" fill="#fff" />
                    <rect width="1.800" height="4.4" fill="#80c4f2" />
                  </pattern>
                  <pattern id="hatchY" width="4.4" height="4.4" patternUnits="userSpaceOnUse" patternTransform="rotate(45)">
                    <rect width="4.4" height="4.4" fill="#fff" />
                    <rect width="1.800" height="4.4" fill="#fdbf10" />
                  </pattern>
                  <pattern id="hatchG" width="4.4" height="4.4" patternUnits="userSpaceOnUse" patternTransform="rotate(45)">
                    <rect width="4.4" height="4.4" fill="#fff" />
                    <rect width="1.800" height="4.4" fill="#eef7ee" />
                  </pattern>
                </defs>
              </PatternDefs>
              <PageTitle>商品の受注から出荷までフロー例</PageTitle>
              {FLOW.map((n) => (
                <Node key={n.t} $x={n.x} $y={n.y} $w={n.w} $h={n.h}>
                  <FlowShape k={n.k} w={n.w} h={n.h} />
                  <NodeLabel>{n.t}</NodeLabel>
                </Node>
              ))}
            </Page>
            <AiPill>
              <Wand2 size={22} strokeWidth={2} color="#2b66f0" />
              <Sparkles size={26} strokeWidth={0} fill="#2b66f0" />
            </AiPill>
          </Canvas>
          <VScroll><VThumb /></VScroll>
        </MidRow>
        <HScrollRow><HThumb /></HScrollRow>
        <ColorRow>
          <Slot $w={20}><Bucket s={18} /></Slot>
          <Caret $ml={0} />
          <SwatchWrap>{COLORS.map((c, i) => <Swatch key={i} $c={c} />)}</SwatchWrap>
        </ColorRow>
      </Main>

      <RightRail>
        <RightTop><ChevronsLeft size={24} strokeWidth={2.2} /></RightTop>
        <RightActive><Bucket s={26} /></RightActive>
        <RightItem><Ic $s={24} strokeWidth={2.2}><path d="M4 3h11l5 5v13H4z" /><path d="M8 12h1M12 12h5M8 16h1M12 16h5" /></Ic></RightItem>
        <RightItem><Ic $s={26} strokeWidth={2.2}><path d="M2 4h20M4 4v14h16V4M7 22l2-4M17 22l-2-4" /><path d="M10 8l5 3-5 3z" fill="currentColor" /></Ic></RightItem>
        <RightItem><History size={24} strokeWidth={2.4} /></RightItem>
        <RightItem><CircleHelp size={24} strokeWidth={2.2} /></RightItem>
        <RightGear><Settings size={22} strokeWidth={2.2} /></RightGear>
      </RightRail>
    </Workspace>

    <Status>
      <Slot $w={22} $ml={23}><Ic strokeWidth={1.6}><path d="M2 5v14M22 5v14" /><rect x="6" y="5" width="12" height="14" /></Ic></Slot>
      <MenuSep $ml={15} />
      <Txt $ml={21} $w={48}><J>ページ</J>-1</Txt>
      <Caret $ml={70} />
      <MenuSep $ml={14} />
      <Slot $w={16} $ml={17}><Plus size={16} strokeWidth={1.6} /></Slot>
      <MenuSep $ml={17} />
      <Txt $ml={21} $c={BLUE}><J>ページ</J>-1</Txt>
      <StatusRight>
        <MenuSep />
        <Txt $ml={10} $w={105}>図形の個数： 11</Txt>
        <MenuSep $ml={11} />
        <Slot $w={22} $ml={14}><Ic strokeWidth={1.5}><path d="M12 3l10 8-10 8-10-8z" /><path d="M4 15l8 6.500 8-6.500" /></Ic></Slot>
        <Caret $ml={5} />
        <Slot $w={20} $ml={19}><Ic $s={20} strokeWidth={1.5}><path d="M3 7V3h4M17 3h4v4M21 17v4h-4M7 21H3v-4" /><rect x="9" y="7" width="6" height="10" rx="1" /></Ic></Slot>
        <Txt $ml={10} $w={82}>全画面<J>モード</J></Txt>
        <Slot $w={22} $ml={14}><Ic strokeWidth={1.5}><circle cx="12" cy="12" r="10" /><path d="M10 8l5 4-5 4z" /></Ic></Slot>
        <MenuSep $ml={13} />
        <Slot $w={14} $ml={13}><Minus size={14} strokeWidth={1.6} /></Slot>
        <Slider><SliderFill /><SliderKnob /></Slider>
        <Slot $w={16} $ml={13}><Plus size={16} strokeWidth={1.6} /></Slot>
        <Txt $ml={23} $w={28}>81%</Txt>
        <Caret $ml={14} />
        <MenuSep $ml={15} />
        <Slot $w={22} $ml={14}><Ic $s={20} strokeWidth={1.5}><path d="M3 7V3h4M17 3h4v4M21 17v4h-4M7 21H3v-4" /><rect x="8" y="8" width="8" height="8" rx="1" /></Ic></Slot>
        <Slot $w={22} $ml={18}><Ic $s={20} strokeWidth={1.5}><rect x="4" y="3" width="16" height="18" rx="1" /><path d="M7 12h10M9 10l-2 2 2 2M15 10l2 2-2 2" /></Ic></Slot>
      </StatusRight>
    </Status>
  </Shell>
);

export default App;
